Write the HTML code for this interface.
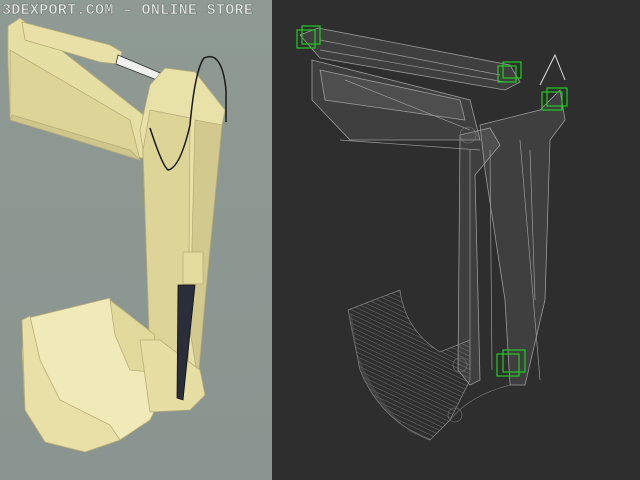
<!DOCTYPE html>
<html><head><style>
html,body{margin:0;padding:0;width:640px;height:480px;overflow:hidden;background:#2e2e2e}
svg{display:block}
.t{font-family:"Liberation Mono",monospace;font-size:15px;font-weight:bold;fill:#e4e7e4;stroke:#6a706c;stroke-width:.5;letter-spacing:0.3px}
</style></head><body>
<svg width="640" height="480" viewBox="0 0 640 480">
<defs>
<linearGradient id="bg" x1="0" y1="0" x2="0" y2="1"><stop offset="0" stop-color="#8f9a94"/><stop offset="1" stop-color="#8a9490"/></linearGradient>
<pattern id="hatch" width="4" height="4" patternUnits="userSpaceOnUse" patternTransform="rotate(25)"><line x1="0" y1="0" x2="4" y2="0" stroke="#8a8a8a" stroke-width="0.7"/></pattern>
</defs>
<rect x="0" y="0" width="272" height="480" fill="url(#bg)"/>
<rect x="272" y="0" width="368" height="480" fill="#2e2e2e"/>
<g stroke="#b8ad78" stroke-width="0.8">
<polygon points="8,26 20,18 150,120 150,160 130,155 60,135 10,118 8,60" fill="#e6dfa4"/>
<polygon points="10,50 130,120 140,160 60,135 10,118" fill="#ddd498"/>
<polygon points="12,115 130,150 140,160 60,135 10,120" fill="#cfc68c"/>
<polygon points="22,22 110,45 122,52 118,64 100,62 25,40" fill="#e8e0a6"/>
<polygon points="118,55 165,75 162,82 116,64" fill="#f0f0ee" stroke="#333"/>
<polygon points="150,85 165,68 195,72 225,110 222,125 205,130 198,380 190,405 160,410 150,360 143,150 140,130" fill="#e9e2a8"/>
<polygon points="150,110 190,118 188,400 160,410 150,360 143,150" fill="#ddd597"/>
<polygon points="195,120 222,125 205,300 198,380 190,330" fill="#d2c98e"/>
<polygon points="28,318 110,298 115,330 130,360 150,370 160,400 150,420 120,440 85,452 45,442 25,410 22,350" fill="#f0eab8"/>
<polygon points="22,320 30,316 40,360 60,400 110,425 120,440 85,452 45,442 25,410" fill="#e8e0a6"/>
<polygon points="110,300 115,335 130,370 150,372 155,335" fill="#e2da9c"/>
<polygon points="140,340 160,340 200,370 205,395 190,410 150,412" fill="#e6dea2"/>
<polygon points="178,285 195,285 183,400 177,398" fill="#2a2d3a" stroke="#111"/>
<rect x="183" y="252" width="20" height="32" fill="#e4dc9e"/>
</g>
<path d="M150,128 Q162,165 168,170 Q180,168 190,125 Q195,70 204,58 Q222,50 226,90 L226,122" fill="none" stroke="#1a1a1a" stroke-width="1.5"/>
<text class="t" x="2" y="14">3DEXPORT.COM – ONLINE STORE</text>
<g fill="#bbbbbb" fill-opacity="0.12" stroke="#9a9a9a" stroke-width="0.8">
<polygon points="300,35 318,28 510,65 520,82 505,90 320,58"/>
<polygon points="312,60 470,100 480,140 350,140 312,100"/>
<polygon points="320,70 460,100 465,120 325,100"/>
<polygon points="460,135 490,128 500,145 475,175 480,380 470,385 458,370"/>
<polygon points="480,125 540,110 560,90 565,120 550,140 545,300 525,385 510,385 505,300 485,170"/>
</g>
<g fill="none" stroke="#9a9a9a" stroke-width="0.7">
<line x1="470" y1="150" x2="470" y2="370"/><line x1="490" y1="150" x2="492" y2="370"/>
<line x1="520" y1="140" x2="540" y2="380"/><line x1="530" y1="150" x2="535" y2="300"/>
<line x1="340" y1="140" x2="480" y2="150"/><line x1="345" y1="80" x2="470" y2="130"/>
<line x1="320" y1="40" x2="500" y2="75"/><line x1="320" y1="50" x2="505" y2="82"/>
</g>
<path d="M348,310 L400,290 Q405,330 440,352 L470,340 L470,380 L450,420 L430,440 Q380,420 360,370 Z" fill="url(#hatch)" stroke="#888" stroke-width="0.7"/>
<path d="M348,312 Q356,380 410,432 L430,440 Q380,420 360,370 L352,315 Z" fill="#555" opacity="0.5"/>
<g fill="none" stroke="#7a7a7a" stroke-width="0.6">
<circle cx="460" cy="365" r="7"/><circle cx="455" cy="415" r="7"/><circle cx="468" cy="135" r="8"/>
<path d="M450,420 Q470,395 510,385"/>
</g>
<g fill="none" stroke="#22cc22" stroke-width="1.2">
<rect x="297" y="30" width="18" height="18"/><rect x="302" y="26" width="18" height="18"/>
<rect x="498" y="66" width="18" height="16"/><rect x="503" y="62" width="18" height="16"/>
<rect x="542" y="92" width="20" height="18"/><rect x="547" y="88" width="20" height="18"/>
<rect x="497" y="354" width="22" height="22"/><rect x="503" y="350" width="22" height="22"/>
</g>
<path d="M540,85 L555,55 L565,80" fill="none" stroke="#ddd" stroke-width="1"/>
</svg>
</body></html>
